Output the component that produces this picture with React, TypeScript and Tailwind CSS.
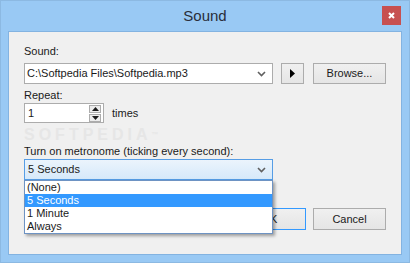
import { useState } from "react";

const Chevron = () => (
    <svg width="9" height="6" viewBox="0 0 9 6" className="shrink-0">
        <path d="M1 1 L4.5 4.5 L8 1" fill="none" stroke="#606060" strokeWidth="1.6" />
    </svg>
);

const SpinArrow = ({ up }: { up: boolean }) => (
    <svg width="7" height="4" viewBox="0 0 7 4">
        {up ? <path d="M0 4 L3.5 0 L7 4 Z" fill="#1a1a1a" /> : <path d="M0 0 L3.5 4 L7 0 Z" fill="#1a1a1a" />}
    </svg>
);

const App = () => {
    const [selected, setSelected] = useState("5 Seconds");
    const options = ["(None)", "5 Seconds", "1 Minute", "Always"];

    return (
        <div
            className="w-[410px] h-[263px] bg-[#99c9f4] border border-[#8cb9e2] flex flex-col text-[11px] text-[#1a1a1a] select-none"
            style={{ fontFamily: '"Liberation Sans", Arial, sans-serif' }}
        >
            {/* title bar */}
            <div className="h-[30px] grid grid-cols-[1fr_auto_1fr] items-start">
                <div />
                <div className="pt-[5px] text-[15px] leading-[20px] text-[#2a2e3a]">Sound</div>
                <div className="flex justify-end pr-[8px] pt-[5px]">
                    <div className="w-[19px] h-[19px] bg-[#c75050] flex items-center justify-center">
                        <svg width="7" height="7" viewBox="0 0 7 7">
                            <path d="M1 1 L6 6 M6 1 L1 6" stroke="white" strokeWidth="2" />
                        </svg>
                    </div>
                </div>
            </div>

            {/* client area */}
            <div className="relative mx-[7px] mb-[7px] flex-1 bg-[#f0f0f0] border border-[#83b3e1] pt-[11px] pl-[15px] pr-[15px] flex flex-col">
                {/* watermark */}
                <div className="absolute left-[15px] top-[96px] text-[16px] font-bold tracking-[4px] text-[#e6e6e6] leading-[13px] pointer-events-none">
                    SOFTPEDIA<span className="text-[7px] align-top">™</span>
                </div>

                <div className="h-[16px] leading-[16px]">Sound:</div>
                <div className="mt-[4px] flex items-center">
                    <div className="w-[249px] h-[21px] bg-white border border-[#acacac] flex items-center pl-[2px] pr-[6px]">
                        <span className="flex-1 whitespace-nowrap">C:\Softpedia Files\Softpedia.mp3</span>
                        <Chevron />
                    </div>
                    <button className="ml-[8px] w-[23px] h-[21px] border border-[#acacac] bg-gradient-to-b from-[#f0f0f0] to-[#e5e5e5] flex items-center justify-center">
                        <svg width="5" height="9" viewBox="0 0 5 9">
                            <path d="M0 0 L5 4.5 L0 9 Z" fill="#000" />
                        </svg>
                    </button>
                    <button className="ml-[9px] w-[73px] h-[21px] border border-[#acacac] bg-gradient-to-b from-[#f0f0f0] to-[#e5e5e5] flex items-center justify-center leading-none">
                        Browse...
                    </button>
                </div>

                <div className="mt-[3px] h-[16px] leading-[16px]">Repeat:</div>
                <div className="flex items-center">
                    <div className="w-[80px] h-[20px] bg-white border border-[#acacac] flex items-center pl-[3px] pr-[2px]">
                        <span className="flex-1">1</span>
                        <div className="w-[12px] h-[17px] flex flex-col gap-[1px]">
                            <div className="flex-1 border border-[#acacac] bg-[#ececec] flex items-center justify-center">
                                <SpinArrow up />
                            </div>
                            <div className="flex-1 border border-[#acacac] bg-[#ececec] flex items-center justify-center">
                                <SpinArrow up={false} />
                            </div>
                        </div>
                    </div>
                    <span className="ml-[8px]">times</span>
                </div>

                <div className="mt-[20px] h-[16px] leading-[16px]">Turn on metronome (ticking every second):</div>
                <div className="relative w-[249px]">
                    <div className="h-[21px] border border-[#569de5] bg-gradient-to-b from-[#ebf4fc] to-[#d6e9fa] flex items-center pl-[3px] pr-[6px]">
                        <span className="flex-1">{selected}</span>
                        <Chevron />
                    </div>
                    <div className="absolute left-0 top-full w-full z-10 bg-white border border-[#6e93c3] shadow-[2px_2px_3px_rgba(0,0,0,0.35)]">
                        {options.map((o) => (
                            <div
                                key={o}
                                onClick={() => setSelected(o)}
                                className={`h-[13px] leading-[13px] pl-[2px] overflow-hidden ${
                                    o === selected ? "bg-[#3399ff] text-white" : ""
                                }`}
                            >
                                {o}
                            </div>
                        ))}
                    </div>
                </div>

                <div className="mt-[28px] flex justify-end gap-[7px]">
                    <button className="w-[73px] h-[22px] border border-[#3399ff] bg-gradient-to-b from-[#f0f0f0] to-[#e5e5e5] flex items-center justify-center leading-none">
                        OK
                    </button>
                    <button className="w-[73px] h-[22px] border border-[#acacac] bg-gradient-to-b from-[#f0f0f0] to-[#e5e5e5] flex items-center justify-center leading-none">
                        Cancel
                    </button>
                </div>
            </div>
        </div>
    );
};

export default App;
